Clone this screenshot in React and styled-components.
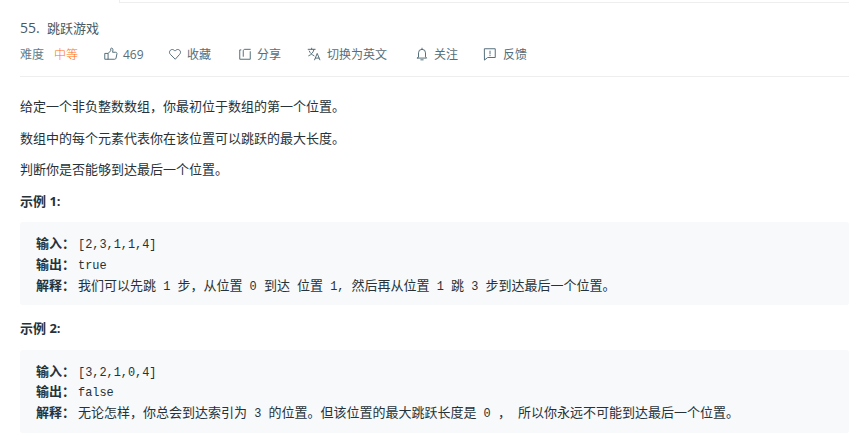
import React from 'react';
import styled, { createGlobalStyle } from 'styled-components';

const Global = createGlobalStyle`
  html, body { margin: 0; padding: 0; background: #fff; }
  body { width: 849px; height: 442px; overflow: hidden; font-family: "Open Sans", "Noto Sans CJK SC", sans-serif; color: #263238; }
`;

const Page = styled.div`
  width: 849px;
  height: 442px;
  overflow: hidden;
  display: flex;
  flex-direction: column;
`;
const TopEdge = styled.div`
  flex: none;
  height: 2px;
  margin-left: 119px;
  border-left: 1px solid #eeeeee;
  border-bottom: 1px solid #eeeeee;
`;
const Header = styled.header`
  flex: none;
  margin-left: 20px;
  height: 73px;
  border-bottom: 1px solid #eeeeee;
`;
const Title = styled.h1`
  display: flex;
  align-items: center;
  margin: 0;
  padding-top: 15px;
  height: 20px;
  font-size: 13px;
  line-height: 20px;
  font-weight: 400;
  color: #455a64;
`;
const Num = styled.span`
  width: 27px;
  font-size: 14px;
`;
const Meta = styled.div`
  display: flex;
  align-items: center;
  height: 20px;
  margin-top: 6px;
  font-size: 12px;
  color: #607d8b;
`;
const Label = styled.span`
  width: 34px;
  color: #607d8b;
`;
const Level = styled.span`
  width: 50px;
  color: #ff6d00;
  font-weight: 300;
`;
const Action = styled.span`
  display: flex;
  align-items: center;
  gap: ${p => p.$gap || 6}px;
  width: ${p => p.$w}px;
  color: #546e7a;
  svg { flex: none; color: #546e7a; }
`;
const Body = styled.main`
  flex: none;
  padding: 19px 0 0 20px;
`;
const P = styled.p`
  margin: 0 0 10.8px;
  font-size: 13px;
  line-height: 20.8px;
  color: #263238;
`;
const Example = styled(P)`
  font-weight: 700;
`;
const Pre = styled.pre`
  margin: 0 0 12.5px;
  padding: 13px 16px 8px;
  background: #f7f9fa;
  border-radius: 3px;
  font-family: "Liberation Mono", "Noto Sans CJK SC", monospace;
  font-size: 11.9px;
  line-height: 20.7px;
  color: #263238;
  white-space: pre;
`;
const Key = styled.strong`
  display: inline-block;
  width: 42px;
  font-family: "Noto Sans CJK SC", sans-serif;
  font-size: 13px;
  font-weight: 700;
  line-height: 1;
`;
const C = styled.span`
  font-family: "Noto Sans CJK SC", sans-serif;
  font-size: 13px;
  line-height: 1;
`;
const Icon = ({ children }) => (
  <svg width="14" height="14" viewBox="0 0 24 24" fill="none" stroke="currentColor" strokeWidth="1.7" strokeLinecap="round" strokeLinejoin="round">{children}</svg>
);

export default function App() {
  return (
    <Page>
      <Global />
      <TopEdge />
      <Header>
        <Title><Num>55.</Num>跳跃游戏</Title>
        <Meta>
          <Label>难度</Label>
          <Level>中等</Level>
          <Action $w={64} $gap={5}>
            <Icon><path d="M2 11h5v10H2zM7 11l4.500-4.500V3c0-1 2-1.500 3-.5s1 3 .2 6.500H20c1.500 0 2.500 1.200 2.200 2.500l-1.500 7.500c-.3 1.300-1.200 2-2.500 2H7" /></Icon>
            469
          </Action>
          <Action $w={70} $gap={5}>
            <Icon><path d="M12 20.500 4 12.600C2 10.600 2 7.500 4 5.600c2-1.900 5-1.700 6.800.2L12 7l1.200-1.200c1.800-1.900 4.800-2.100 6.800-.2 2 1.900 2 5 0 7z" /></Icon>
            收藏
          </Action>
          <Action $w={69} $gap={5}>
            <Icon><path d="M5 5H3v16h18V8M9 16V7c0-2 1-3 3-3h9" /></Icon>
            分享
          </Action>
          <Action $w={108} $gap={6}>
            <svg width="14" height="14" viewBox="0 0 24 24" fill="none" stroke="currentColor" strokeWidth="1.7" strokeLinecap="round" strokeLinejoin="round"><path d="M2 4h12M8 2v2M12 4c-1 5-4 9-9 11M4 7c1 3 4 6 8 8M13 22l4.500-11 4.500 11M14.500 19h6" /></svg>
            切换为英文
          </Action>
          <Action $w={68} $gap={5}>
            <Icon><path d="M6 17V10a6 6 0 0 1 12 0v7l2 2H4zM10 22h4M12 2v2" /></Icon>
            关注
          </Action>
          <Action $w={60} $gap={6}>
            <Icon><path d="M3 3h18v15H8l-5 4zM12 7v5M12 14.500v.5" /></Icon>
            反馈
          </Action>
        </Meta>
      </Header>
      <Body>
        <P>给定一个非负整数数组，你最初位于数组的第一个位置。</P>
        <P>数组中的每个元素代表你在该位置可以跳跃的最大长度。</P>
        <P>判断你是否能够到达最后一个位置。</P>
        <Example>示例 1:</Example>
        <Pre>
          <Key>输入：</Key>[2,3,1,1,4]{'\n'}
          <Key>输出：</Key>true{'\n'}
          <Key>解释：</Key><C>我们可以先跳</C> 1 <C>步，从位置</C> 0 <C>到达</C> <C>位置</C> 1, <C>然后再从位置</C> 1 <C>跳</C> 3 <C>步到达最后一个位置。</C>
        </Pre>
        <Example>示例 2:</Example>
        <Pre>
          <Key>输入：</Key>[3,2,1,0,4]{'\n'}
          <Key>输出：</Key>false{'\n'}
          <Key>解释：</Key><C>无论怎样，你总会到达索引为</C> 3 <C>的位置。但该位置的最大跳跃长度是</C> 0 <C>，</C> <C>所以你永远不可能到达最后一个位置。</C>
        </Pre>
      </Body>
    </Page>
  );
}
